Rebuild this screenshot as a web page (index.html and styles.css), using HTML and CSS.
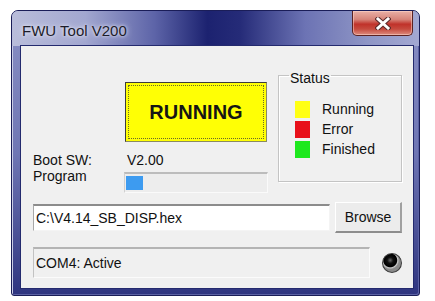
FILE: index.html
```html
<!DOCTYPE html>
<html lang="en">

<head>
    <meta charset="UTF-8">
    <meta name="viewport" content="width=device-width, initial-scale=1.0">
    <title>FWU Tool V200</title>
    <link rel="stylesheet" href="styles.css">
</head>

<body>
    <div class="window">
        <div class="titlebar">
            <span class="title">FWU Tool V200</span>
            <button class="close-button" title="Close">
                <svg width="16" height="13" viewBox="0 0 16 13">
                    <path d="M3 2 L13 11 M13 2 L3 11" stroke="#5a2a2a" stroke-width="5" stroke-linecap="square" />
                    <path d="M3 2 L13 11 M13 2 L3 11" stroke="#fff" stroke-width="3" stroke-linecap="square" />
                </svg>
            </button>
        </div>

        <div class="client">
            <div class="top-section">
                <div class="main-col">
                    <div class="state-box">
                        <div class="state-inner">RUNNING</div>
                    </div>
                    <div class="info-row boot-row">
                        <span class="info-label">Boot SW:</span>
                        <span class="info-value">V2.00</span>
                    </div>
                    <div class="info-row">
                        <span class="info-label">Program</span>
                        <div class="progress">
                            <div class="progress-fill" style="width: 17px;"></div>
                        </div>
                    </div>
                </div>

                <fieldset class="status-group">
                    <legend>Status</legend>
                    <div class="status-list">
                        <div class="status-item"><span class="swatch yellow"></span>Running</div>
                        <div class="status-item"><span class="swatch red"></span>Error</div>
                        <div class="status-item"><span class="swatch green"></span>Finished</div>
                    </div>
                </fieldset>
            </div>

            <div class="file-row">
                <input type="text" class="file-input" value="C:\V4.14_SB_DISP.hex">
                <button class="browse-button">Browse</button>
            </div>

            <div class="bottom-row">
                <div class="status-panel">COM4: Active</div>
                <span class="led"></span>
            </div>
        </div>
    </div>
</body>

</html>
```

FILE: styles.css
```css
body {
    margin: 0;
    background-color: #fff;
    font-family: "Liberation Sans", Arial, sans-serif;
    font-size: 14px;
    color: #111;
}

.window {
    margin: 10px 0 0 11px;
    width: 409px;
    height: 286px;
    box-sizing: border-box;
    display: flex;
    flex-direction: column;
    border: 1px solid #1a1d58;
    border-radius: 7px 7px 3px 3px;
    background: linear-gradient(to bottom, #8a90c4 0%, #6f76b4 50%, #2f3580 100%);
    box-shadow: inset 1px 1px 0 #c9cce6, inset -1px -1px 0 #5c62a4;
}

.titlebar {
    height: 35px;
    display: flex;
    align-items: flex-start;
    border-radius: 6px 6px 0 0;
    background: linear-gradient(90deg, #b9bdda 0%, #a2a7d0 18%, #5d64a8 35%, #1c2270 48%, #252b78 56%, #6c73b4 72%, #9097c6 88%, #a3a8d2 100%);
}

.title {
    margin: 11px 0 0 10px;
    font-size: 15px;
    color: #1c1c2a;
    text-shadow: 0 0 6px #e6e8f6, 0 0 3px #e6e8f6;
}

.close-button {
    margin-left: auto;
    margin-right: 6px;
    width: 61px;
    height: 25px;
    padding: 0;
    border: 1px solid #5b2222;
    border-top: none;
    border-radius: 0 0 5px 5px;
    background: linear-gradient(to bottom, #e9b0a6 0%, #d7857a 35%, #c0322a 55%, #c64a3e 75%, #dd8c7e 100%);
    box-shadow: inset 0 0 0 1px rgba(255, 220, 210, 0.5);
    display: flex;
    align-items: center;
    justify-content: center;
}

.client {
    margin: 0 6px 7px 9px;
    height: 242px;
    box-sizing: border-box;
    padding: 0 11px 0 12px;
    background-color: #f0f0f0;
    box-shadow: 0 0 0 1px #242a6e;
}

.top-section {
    display: flex;
    gap: 10px;
}

.main-col {
    width: 235px;
    padding-top: 36px;
}

.state-box {
    margin-left: 92px;
    width: 142px;
    height: 60px;
    box-sizing: border-box;
    padding: 2px;
    border: 1px solid #3c3c3c;
    border-right-color: #8a8a60;
    border-bottom-color: #8a8a60;
    background-color: #ffff05;
}

.state-inner {
    height: 100%;
    box-sizing: border-box;
    border: 1px dotted #6b6b2a;
    display: flex;
    align-items: center;
    justify-content: center;
    font-size: 20px;
    font-weight: bold;
    color: #151515;
}

.info-row {
    display: flex;
    align-items: flex-start;
    line-height: 16px;
}

.boot-row {
    margin-top: 10px;
}

.info-label {
    width: 91px;
}

.info-value {
    padding-left: 3px;
}

.progress {
    margin-top: 4px;
    width: 144px;
    height: 21px;
    box-sizing: border-box;
    padding: 2px 1px;
    border-top: 2px solid #bcbcbc;
    border-left: 1px solid #d0d0d0;
    border-bottom: 1px solid #fafafa;
    border-right: 1px solid #fafafa;
    background-color: #ededed;
}

.progress-fill {
    height: 100%;
    background-color: #3d9bf0;
}

.status-group {
    margin: 19px 0 0;
    padding: 0 0 0 16px;
    width: 124px;
    height: 117px;
    box-sizing: border-box;
    border: 1px solid #c4c4c4;
    box-shadow: inset 1px 1px 0 #fff, 1px 1px 0 #fff;
}

.status-group legend {
    margin-left: -6px;
    padding: 5px 1px 0;
    line-height: 16px;
}

.status-list {
    margin-top: 13px;
}

.status-item {
    height: 20px;
    display: flex;
    align-items: center;
    gap: 12px;
}

.swatch {
    width: 15px;
    height: 17px;
}

.swatch.yellow {
    background-color: #ffff14;
}

.swatch.red {
    background-color: #e8101a;
}

.swatch.green {
    background-color: #1ee81e;
}

.file-row {
    margin-top: 9px;
    display: flex;
    align-items: center;
    height: 31px;
}

.file-input {
    width: 297px;
    height: 27px;
    box-sizing: border-box;
    margin: 0;
    padding: 0 2px;
    border-top: 2px solid #8c8c8c;
    border-left: 1px solid #a8a8a8;
    border-bottom: 1px solid #f4f4f4;
    border-right: 1px solid #f4f4f4;
    background-color: #fff;
    font-family: "Liberation Sans", Arial, sans-serif;
    font-size: 14px;
    color: #111;
    outline: none;
}

.browse-button {
    margin-left: 5px;
    width: 67px;
    height: 31px;
    padding: 0;
    border-top: 1px solid #fff;
    border-left: 1px solid #fff;
    border-bottom: 2px solid #8d8d8d;
    border-right: 2px solid #a0a0a0;
    background-color: #ececec;
    font-family: "Liberation Sans", Arial, sans-serif;
    font-size: 14px;
    color: #111;
}

.bottom-row {
    margin-top: 14px;
    display: flex;
    align-items: center;
    gap: 12px;
}

.status-panel {
    width: 339px;
    height: 31px;
    box-sizing: border-box;
    padding-left: 2px;
    display: flex;
    align-items: center;
    border-top: 2px solid #b4b4b4;
    border-left: 1px solid #c2c2c2;
    border-bottom: 1px solid #fbfbfb;
    border-right: 1px solid #fbfbfb;
}

.led {
    width: 20px;
    height: 20px;
    box-sizing: border-box;
    border-radius: 50%;
    border: 1px solid #3a3a3a;
    background: radial-gradient(circle at 40% 35%, #6a6a6a 0, #101010 3px, #000 6px, #000 6.5px, #c9c9c9 7.5px, #8a8a8a 9px);
}
```
